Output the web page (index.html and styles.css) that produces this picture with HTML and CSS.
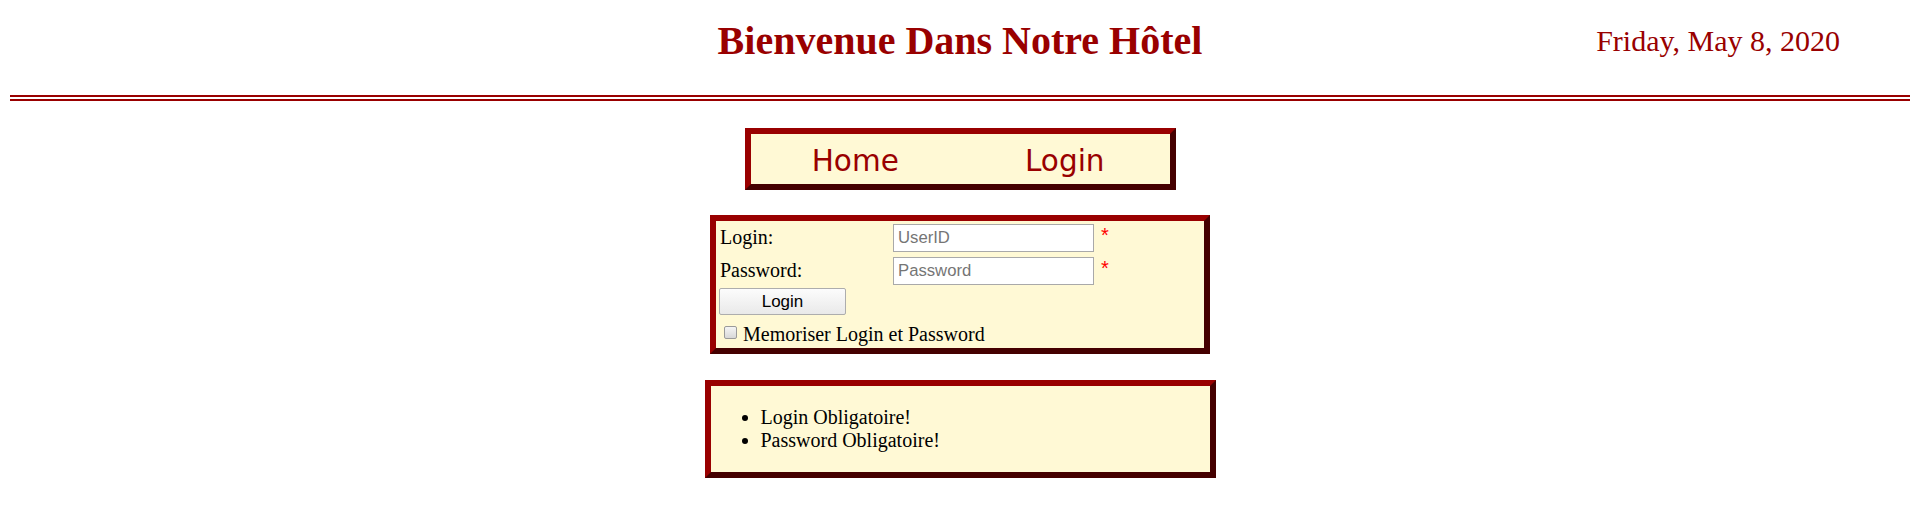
FILE: index.html
```html
<!DOCTYPE html>
<html lang="fr">
<head>
<meta charset="utf-8">
<title>Bienvenue Dans Notre Hôtel</title>
<link rel="stylesheet" href="styles.css">
</head>
<body>
<header class="header">
  <div class="header-side"></div>
  <h1 class="title">Bienvenue Dans Notre Hôtel</h1>
  <div class="date">Friday, May 8, 2020</div>
</header>

<main class="main">
  <nav class="nav box">
    <a class="nav-link" href="#">Home</a>
    <a class="nav-link" href="#">Login</a>
  </nav>

  <form class="login box">
    <div class="row">
      <label class="label" for="user">Login:</label>
      <input class="field" id="user" type="text" placeholder="UserID">
      <span class="req">*</span>
    </div>
    <div class="row row-second">
      <label class="label" for="pass">Password:</label>
      <input class="field" id="pass" type="password" placeholder="Password">
      <span class="req">*</span>
    </div>
    <div class="row row-button">
      <button class="btn" type="button">Login</button>
    </div>
    <div class="row row-check">
      <input class="check" id="mem" type="checkbox">
      <label class="check-label" for="mem">Memoriser Login et Password</label>
    </div>
  </form>

  <div class="errors box">
    <ul class="error-list">
      <li>Login Obligatoire!</li>
      <li>Password Obligatoire!</li>
    </ul>
  </div>
</main>
</body>
</html>
```

FILE: styles.css
```css
html, body {
  background: #ffffff;
}

body {
  margin: 10px;
  font-family: "Liberation Serif", "Times New Roman", serif;
  font-size: 20px;
  color: #000000;
}

.header {
  display: grid;
  grid-template-columns: 1fr auto 1fr;
  align-items: center;
  padding-top: 9px;
  padding-bottom: 32px;
  border-bottom: 6px double #990000;
}

.title {
  margin: 0;
  font-size: 40px;
  font-weight: bold;
  color: #990000;
  line-height: 44px;
  white-space: nowrap;
}

.date {
  justify-self: end;
  margin-right: 70px;
  font-size: 30px;
  color: #990000;
  white-space: nowrap;
}

.main {
  display: flex;
  flex-direction: column;
  align-items: center;
  padding-top: 27px;
}

.box {
  box-sizing: border-box;
  background: #fff9d5;
  border-style: solid;
  border-width: 6px;
  border-color: #990000 #450000 #450000 #990000;
}

.nav {
  width: 431px;
  height: 62px;
  display: grid;
  grid-template-columns: 1fr 1fr;
  padding-top: 10px;
}

.nav-link {
  font-family: "DejaVu Sans", Verdana, sans-serif;
  font-size: 29.5px;
  color: #990000;
  text-decoration: none;
  text-align: center;
  line-height: 35px;
}

.login {
  width: 500px;
  margin-top: 25px;
  padding: 3px 4px 3px 3px;
}

.row {
  display: flex;
  align-items: center;
  height: 27px;
}

.row-second {
  margin-top: 6px;
}

.row-button {
  margin-top: 4px;
}

.row-check {
  margin-top: 4px;
  height: 26px;
}

.label {
  width: 173px;
  padding-left: 1px;
  line-height: 23px;
  flex-shrink: 0;
}

.field {
  box-sizing: border-box;
  width: 201px;
  height: 28px;
  margin: 0;
  padding: 1px 4px;
  border: 1px solid #a9a9a9;
  border-radius: 0;
  background: #ffffff;
  font-family: "Liberation Sans", Arial, sans-serif;
  font-size: 16.7px;
  color: #000000;
}

.field::placeholder {
  color: #757575;
}

.req {
  margin-left: 7px;
  align-self: flex-start;
  margin-top: 1px;
  font-family: "Liberation Sans", Arial, sans-serif;
  font-size: 20px;
  line-height: 20px;
  color: #ff0000;
}

.btn {
  box-sizing: border-box;
  width: 127px;
  height: 27px;
  margin: 0;
  padding: 0;
  border: 1px solid #adadad;
  border-radius: 2px;
  background: linear-gradient(#fcfcfc, #e9e9e9);
  font-family: "Liberation Sans", Arial, sans-serif;
  font-size: 17px;
  color: #000000;
}

.check {
  appearance: none;
  -webkit-appearance: none;
  box-sizing: border-box;
  width: 13px;
  height: 13px;
  margin: 1px 0 0 5px;
  border: 1px solid #9a9a9a;
  border-radius: 2px;
  background: linear-gradient(#f4f4f4, #d8d8d8);
}

.check-label {
  margin-left: 6px;
  line-height: 23px;
  margin-top: 4px;
}

.errors {
  width: 511px;
  margin-top: 26px;
}

.error-list {
  margin: 20px 0;
  padding-left: 50px;
  line-height: 23px;
}
```
